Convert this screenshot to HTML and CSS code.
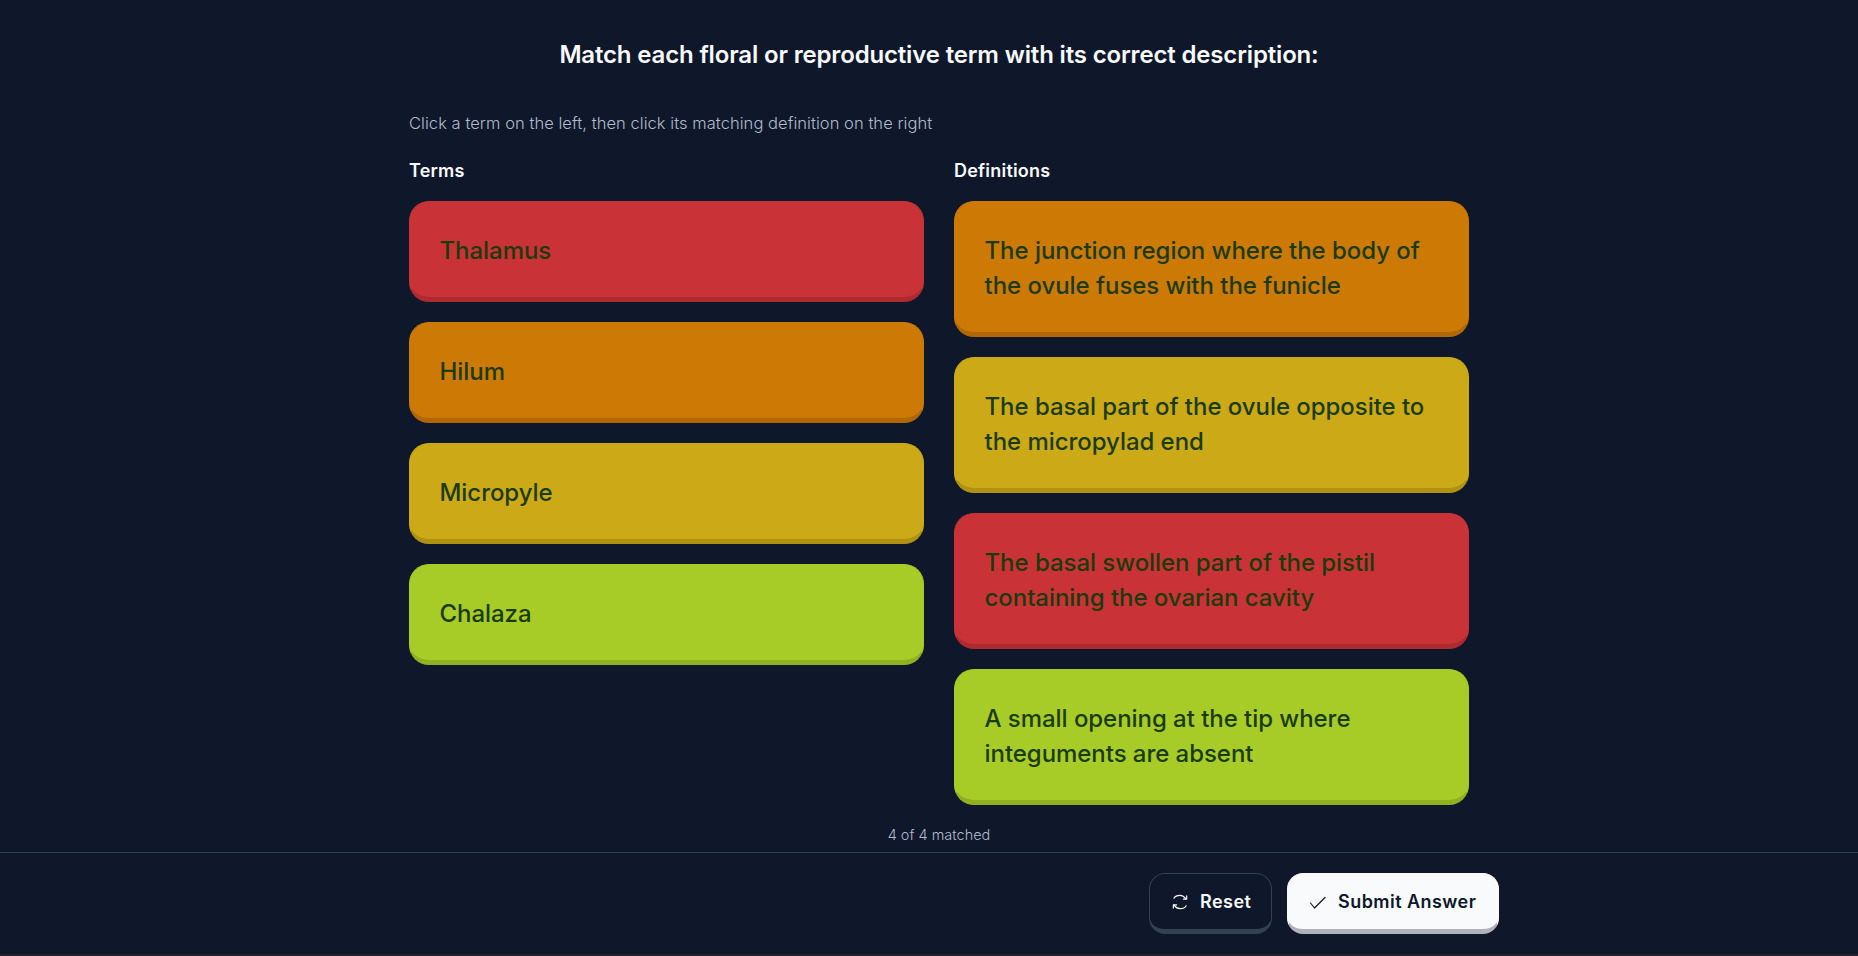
FILE: index.html
```html
<!doctype html>
<html>
<head>
	<meta charset="utf-8">
	<title>Match the terms</title>
	<link rel="stylesheet" href="styles.css">
</head>
<body>
	<div class="page">
		<main class="quiz">
			<h1 class="question">Match each floral or reproductive term with its correct description:</h1>
			<p class="hint">Click a term on the left, then click its matching definition on the right</p>
			<div class="columns">
				<section class="column">
					<h2 class="column-title">Terms</h2>
					<div class="card red">Thalamus</div>
					<div class="card orange">Hilum</div>
					<div class="card yellow">Micropyle</div>
					<div class="card lime">Chalaza</div>
				</section>
				<section class="column">
					<h2 class="column-title">Definitions</h2>
					<div class="card orange">The junction region where the body of the ovule fuses with the funicle</div>
					<div class="card yellow">The basal part of the ovule opposite to the micropylad end</div>
					<div class="card red">The basal swollen part of the pistil containing the ovarian cavity</div>
					<div class="card lime">A small opening at the tip where integuments are absent</div>
				</section>
			</div>
			<p class="progress">4 of 4 matched</p>
		</main>
		<footer class="footer">
			<div class="actions">
				<button class="btn btn-reset">
					<svg class="icon" viewBox="-1 -1 20 20" fill="none" stroke="currentColor" stroke-width="1.3" stroke-linecap="round" stroke-linejoin="round">
						<path d="M2.2 4.8C3.5 2.5 5.8 1.6 9 1.6c2.8 0 4.6 1.2 6.6 4"/>
						<path d="M16.4 2.2v3.6h-3.6"/>
						<path d="M15.8 13.2C14.5 15.5 12.2 16.4 9 16.4c-2.8 0-4.6-1.2-6.6-4"/>
						<path d="M1.6 15.8v-3.6h3.6"/>
					</svg>
					Reset
				</button>
				<button class="btn btn-submit">
					<svg class="icon" viewBox="0 0 18 18" fill="none" stroke="currentColor" stroke-width="1.2" stroke-linecap="round" stroke-linejoin="round">
						<path d="M1.5 10l4 5L16 4.5"/>
					</svg>
					Submit Answer
				</button>
			</div>
		</footer>
	</div>
</body>
</html>
```

FILE: styles.css
```css
* {
	box-sizing: border-box;
}
html, body {
	margin: 0;
	height: 100%;
}
body {
	background-color: #0f172a;
	color: #f8fafc;
	font-family: "Inter", "Liberation Sans", sans-serif;
}
.page {
	display: flex;
	flex-direction: column;
	height: 956px;
	border-bottom: 2px solid #2a1f2a;
}
.quiz {
	flex: 1;
	width: 1060px;
	margin-left: 409px;
	padding-top: 38px;
}
.question {
	margin: 0;
	font-size: 24px;
	line-height: 34px;
	font-weight: 600;
	letter-spacing: -0.16px;
	text-align: center;
	color: #f8fafc;
}
.hint {
	margin: 39px 0 0;
	font-size: 16.5px;
	line-height: 24px;
	font-weight: 300;
	letter-spacing: 0.05px;
	color: #b0bccd;
}
.columns {
	display: grid;
	grid-template-columns: 515px 515px;
	column-gap: 30px;
	margin-top: 24px;
}
.column {
	display: flex;
	flex-direction: column;
	gap: 20px;
}
.column-title {
	margin: 0 0 -2px;
	font-size: 18px;
	line-height: 24px;
	font-weight: 600;
	letter-spacing: 0.2px;
}
.card {
	padding: 31px 30px 29px 29.5px;
	font-size: 24px;
	line-height: 35px;
	font-weight: 450;
	letter-spacing: -0.05px;
	color: #1a3b0c;
	border: 1px solid transparent;
	border-bottom-width: 5px;
	border-radius: 20px;
}
.red {
	background-color: #c93338;
	border-color: #c93338 #c93338 #ae2a2e;
}
.orange {
	background-color: #cc7906;
	border-color: #cc7906 #cc7906 #b06705;
}
.yellow {
	background-color: #ccaa17;
	border-color: #ccaa17 #ccaa17 #b09213;
}
.lime {
	background-color: #a8cc27;
	border-color: #a8cc27 #a8cc27 #90b01f;
}
.progress {
	margin: 20px 0 0;
	font-size: 14.5px;
	line-height: 20px;
	font-weight: 300;
	text-align: center;
	color: #b0bccd;
}
.footer {
	border-top: 1px solid #334155;
	height: 102px;
	padding-top: 20px;
}
.actions {
	display: flex;
	justify-content: flex-end;
	gap: 15px;
	width: 1499px;
}
.btn {
	display: flex;
	align-items: center;
	gap: 11px;
	height: 61px;
	padding: 0 20px 0 21px;
	font-family: inherit;
	font-size: 18px;
	font-weight: 600;
	letter-spacing: 0.45px;
	border: 1px solid;
	border-bottom-width: 5px;
	border-radius: 16px;
}
.btn-reset {
	width: 123px;
	background-color: #0f172a;
	color: #f8fafc;
	border-color: #334155;
}
.btn-submit {
	width: 212px;
	background-color: #f8fafc;
	color: #0f172a;
	border-color: #f8fafc #f8fafc #b0b2b9;
}
.icon {
	width: 18px;
	height: 18px;
	flex: none;
}
```
